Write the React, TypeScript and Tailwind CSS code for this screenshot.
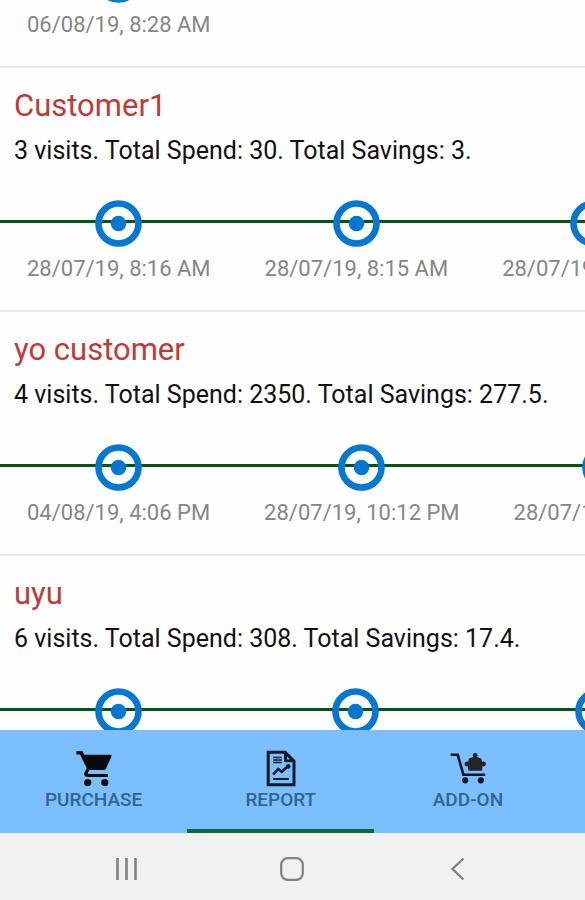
import clsx from 'clsx'
import type { ReactNode } from 'react'

type Customer = {
    name: string
    summary: string
    visits: string[]
}

const previousVisits = ['06/08/19, 8:28 AM']

const customers: Customer[] = [
    {
        name: 'Customer1',
        summary: '3 visits. Total Spend: 30. Total Savings: 3.',
        visits: ['28/07/19, 8:16 AM', '28/07/19, 8:15 AM', '28/07/19, 8:14 AM'],
    },
    {
        name: 'yo customer',
        summary: '4 visits. Total Spend: 2350. Total Savings: 277.5.',
        visits: ['04/08/19, 4:06 PM', '28/07/19, 10:12 PM', '28/07/19, 9:40 PM'],
    },
    {
        name: 'uyu',
        summary: '6 visits. Total Spend: 308. Total Savings: 17.4.',
        visits: ['04/08/19, 4:05 PM', '28/07/19, 9:31 PM', '28/07/19, 10:10 PM'],
    },
]

function VisitMarker() {
    return (
        <svg viewBox="0 0 47 47" className="relative h-[47px] w-[47px]" aria-hidden="true">
            <circle cx="23.5" cy="23.5" r="20" fill="none" stroke="#0476d4" strokeWidth="6.6" />
            <circle cx="23.5" cy="23.5" r="7.8" fill="#0476d4" />
        </svg>
    )
}

function Timeline({ visits }: { visits: string[] }) {
    return (
        <div className="relative shrink-0 overflow-hidden">
            {/* rail behind the markers */}
            <div className="absolute inset-x-0 top-5 h-[3px] bg-[#0d5214]" />
            <ul className="flex">
                {visits.map(visit => (
                    <li key={visit} className="flex shrink-0 flex-col items-center gap-2 px-[27px]">
                        <VisitMarker />
                        <time className="text-[22px] leading-7 whitespace-nowrap text-[#868686]">{visit}</time>
                    </li>
                ))}
            </ul>
        </div>
    )
}

function CustomerRow({ customer }: { customer: Customer }) {
    return (
        <section className="shrink-0 border-b-2 border-[#e9e9e9] pt-5 pb-[27px]">
            <h2 className="px-3.5 text-[31px] leading-9 text-[#c03a38]">{customer.name}</h2>
            <p className="mt-[11px] mb-[33px] px-3.5 text-[25px] leading-8 whitespace-nowrap text-[#111]">
                {customer.summary}
            </p>
            <Timeline visits={customer.visits} />
        </section>
    )
}

function CartIcon() {
    return (
        <svg viewBox="0 0 36 37" className="h-[37px] w-9" fill="#080a0e" aria-hidden="true">
            <path d="M.4 1h5.1c.8 0 1.2.3 1.5 1L8.2 4.7h26c1.2 0 1.7.9 1.3 1.9L30 18.5c-.5 1.1-1.2 1.6-2.4 1.6H13.4l-1.6 2.8c-.3.6 0 1.1.7 1.1H32v3H11.6c-2.7 0-4.3-2.3-3-4.7l2.2-4L4 4.5H.4z" />
            <circle cx="11.7" cy="32.6" r="3.6" />
            <circle cx="28.8" cy="32.6" r="3.6" />
        </svg>
    )
}

function ReportIcon() {
    return (
        <svg viewBox="0 0 30 37" className="h-[37px] w-[30px]" fill="none" stroke="#101a2a" aria-hidden="true">
            <path d="M2.2 2.2h17l8.8 9v23.6H2.2z" strokeWidth="3" />
            <path d="M18.6 1v10.7H29z" fill="#101a2a" />
            <path d="M21 6.5v2.9h3z" fill="#7cbfff" stroke="none" />
            <path d="M7.2 7.5h8.6M7.2 10h8.6M7.2 12.5h8.6" strokeWidth="1.4" />
            <path d="M7.2 24.5l5-5.5 3.6 2.7 6-5.4" strokeWidth="2.6" />
            <circle cx="22.2" cy="16.4" r="2.3" fill="#101a2a" stroke="none" />
            <path d="M7.2 29h15.6" strokeWidth="2" />
        </svg>
    )
}

function AddOnIcon() {
    return (
        <svg viewBox="0 0 36 37" className="h-[37px] w-9" fill="#0c1424" aria-hidden="true">
            <path d="M.7 4.8h7l5.7 19.9h21.8" fill="none" stroke="#0c1424" strokeWidth="2.6" />
            <path d="M19 8.6l6-2.4 6.2 2.4 1.6 5.4-.8 6.8H18.4L17.6 14z" fill="#262429" />
            <circle cx="25.2" cy="5.4" r="2.4" fill="#262429" />
            <circle cx="16.9" cy="14" r="2.4" fill="#262429" />
            <circle cx="33.5" cy="14" r="2.4" fill="#262429" />
            <circle cx="15.2" cy="30.3" r="3.1" />
            <circle cx="30.8" cy="30.3" r="3.1" />
        </svg>
    )
}

function Tab({ label, icon, active = false }: { label: string; icon: ReactNode; active?: boolean }) {
    return (
        <button
            type="button"
            aria-current={active ? 'page' : undefined}
            className={clsx(
                'flex h-full w-[32%] shrink-0 flex-col items-center border-b-4 pt-5',
                active ? 'border-[#0e6a33]' : 'border-transparent',
            )}
        >
            {icon}
            <span className="text-[19px] leading-[26px] font-medium text-[#2f658f]">{label}</span>
        </button>
    )
}

function SystemNav() {
    return (
        <nav aria-label="System" className="grid h-[67px] shrink-0 grid-cols-3 items-center bg-[#f1f1f1] px-11 pt-1">
            <button type="button" aria-label="Recent apps" className="flex justify-center">
                <svg viewBox="0 0 24 24" className="h-6 w-6" stroke="#828282" strokeWidth="2.6" aria-hidden="true">
                    <path d="M2.5 1v22M11.5 1v22M20.5 1v22" />
                </svg>
            </button>
            <button type="button" aria-label="Home" className="flex justify-center">
                <svg viewBox="0 0 24 24" className="h-6 w-6" fill="none" stroke="#828282" strokeWidth="2.2" aria-hidden="true">
                    <rect x="1.2" y="1.2" width="21.6" height="21.6" rx="6.5" />
                </svg>
            </button>
            <button type="button" aria-label="Back" className="flex justify-center">
                <svg viewBox="0 0 24 24" className="h-6 w-6" fill="none" stroke="#828282" strokeWidth="2.4" aria-hidden="true">
                    <path d="M17.5 1.5L6.5 12l11 10.5" />
                </svg>
            </button>
        </nav>
    )
}

export default function App() {
    return (
        <div className="flex h-screen flex-col overflow-hidden bg-[#fefefe] font-[Roboto,sans-serif]">
            <main className="flex min-h-0 flex-1 flex-col overflow-hidden">
                {/* tail of the row scrolled off the top */}
                <section className="flex h-[68px] shrink-0 flex-col justify-end overflow-hidden border-b-2 border-[#e9e9e9] pb-[27px]">
                    <Timeline visits={previousVisits} />
                </section>
                {customers.map(customer => (
                    <CustomerRow key={customer.name} customer={customer} />
                ))}
            </main>
            <nav aria-label="Main" className="flex h-[103px] shrink-0 overflow-hidden bg-[#7cbfff]">
                <Tab label="PURCHASE" icon={<CartIcon />} />
                <Tab label="REPORT" icon={<ReportIcon />} active />
                <Tab label="ADD-ON" icon={<AddOnIcon />} />
            </nav>
            <SystemNav />
        </div>
    )
}
